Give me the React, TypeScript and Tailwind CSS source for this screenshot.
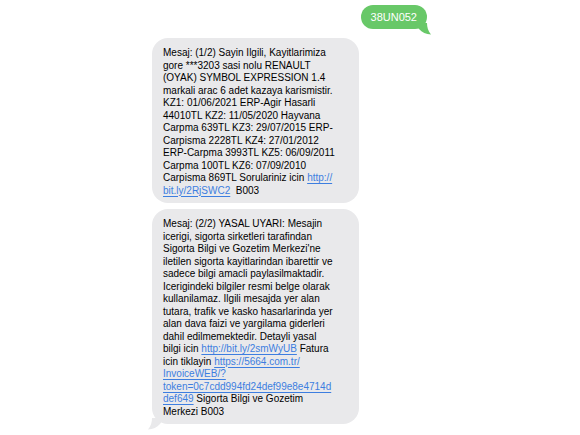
import React from 'react';

type Seg = string | { href: string };

const first: Seg[][] = [
  ['Mesaj: (1/2) Sayin Ilgili, Kayitlarimiza'],
  ['gore ***3203 sasi nolu RENAULT'],
  ['(OYAK) SYMBOL EXPRESSION 1.4'],
  ['markali arac 6 adet kazaya karismistir.'],
  ['KZ1: 01/06/2021 ERP-Agir Hasarli'],
  ['44010TL KZ2: 11/05/2020 Hayvana'],
  ['Carpma 639TL KZ3: 29/07/2015 ERP-'],
  ['Carpisma 2228TL KZ4: 27/01/2012'],
  ['ERP-Carpma 3993TL KZ5: 06/09/2011'],
  ['Carpma 100TL KZ6: 07/09/2010'],
  ['Carpisma 869TL Sorulariniz icin ', { href: 'http://' }],
  [{ href: 'bit.ly/2RjSWC2' }, '\u00a0 B003'],
];

const second: Seg[][] = [
  ['Mesaj: (2/2) YASAL UYARI: Mesajin'],
  ['icerigi, sigorta sirketleri tarafindan'],
  ["Sigorta Bilgi ve Gozetim Merkezi'ne"],
  ['iletilen sigorta kayitlarindan ibarettir ve'],
  ['sadece bilgi amacli paylasilmaktadir.'],
  ['Icerigindeki bilgiler resmi belge olarak'],
  ['kullanilamaz. Ilgili mesajda yer alan'],
  ['tutara, trafik ve kasko hasarlarinda yer'],
  ['alan dava faizi ve yargilama giderleri'],
  ['dahil edilmemektedir. Detayli yasal'],
  ['bilgi icin ', { href: 'http://bit.ly/2smWyUB' }, ' Fatura'],
  ['icin tiklayin ', { href: 'https://5664.com.tr/' }],
  [{ href: 'InvoiceWEB/?' }],
  [{ href: 'token=0c7cdd994fd24def99e8e4714d' }],
  [{ href: 'def649' }, ' Sigorta Bilgi ve Gozetim'],
  ['Merkezi B003'],
];

const Lines: React.FC<{ lines: Seg[][] }> = ({ lines }) => (
  <>
    {lines.map((line, i) => (
      <div key={i} className="whitespace-pre">
        {line.map((seg, j) =>
          typeof seg === 'string' ? (
            <span key={j}>{seg}</span>
          ) : (
            <span key={j} className="text-[#3d7ee0] underline decoration-[1px] underline-offset-[1.5px]">
              {seg.href}
            </span>
          )
        )}
      </div>
    ))}
  </>
);

const Received: React.FC<{ lines: Seg[][]; tail?: boolean }> = ({ lines, tail }) => (
  <div className="relative w-[207px] rounded-[16px] bg-[#e9e9eb] pl-[11px] pr-[8px] pt-[9px] pb-[6px] text-[10px] leading-[12.5px] text-black">
    <Lines lines={lines} />
    {tail && (
      <svg className="absolute left-[-4px] bottom-[-6px]" width="16" height="12" viewBox="0 0 16 12">
        <path d="M16 0 H4 C4 4 3 8 0 11.5 C5 11.5 9 9 12 6 Z" fill="#e9e9eb" />
      </svg>
    )}
  </div>
);

export default function App() {
  return (
    <div className="w-[580px] h-[435px] overflow-hidden bg-white font-['Liberation_Sans',Arial,sans-serif]">
      <div className="flex justify-end pt-[5px] pr-[153px]">
        <div className="relative h-[24px] rounded-[12px] bg-[#68c868] px-[10px] text-[11px] leading-[24px] text-white">
          38UN052
          <svg className="absolute right-[-4px] bottom-[-6px]" width="16" height="12" viewBox="0 0 16 12">
            <path d="M0 0 H12 C12 4 13 8 16 11.5 C11 11.5 7 9 4 6 Z" fill="#68c868" />
          </svg>
        </div>
      </div>
      <div className="flex flex-col gap-[6px] pl-[152px] pt-[9px]">
        <Received lines={first} />
        <Received lines={second} tail />
      </div>
    </div>
  );
}
